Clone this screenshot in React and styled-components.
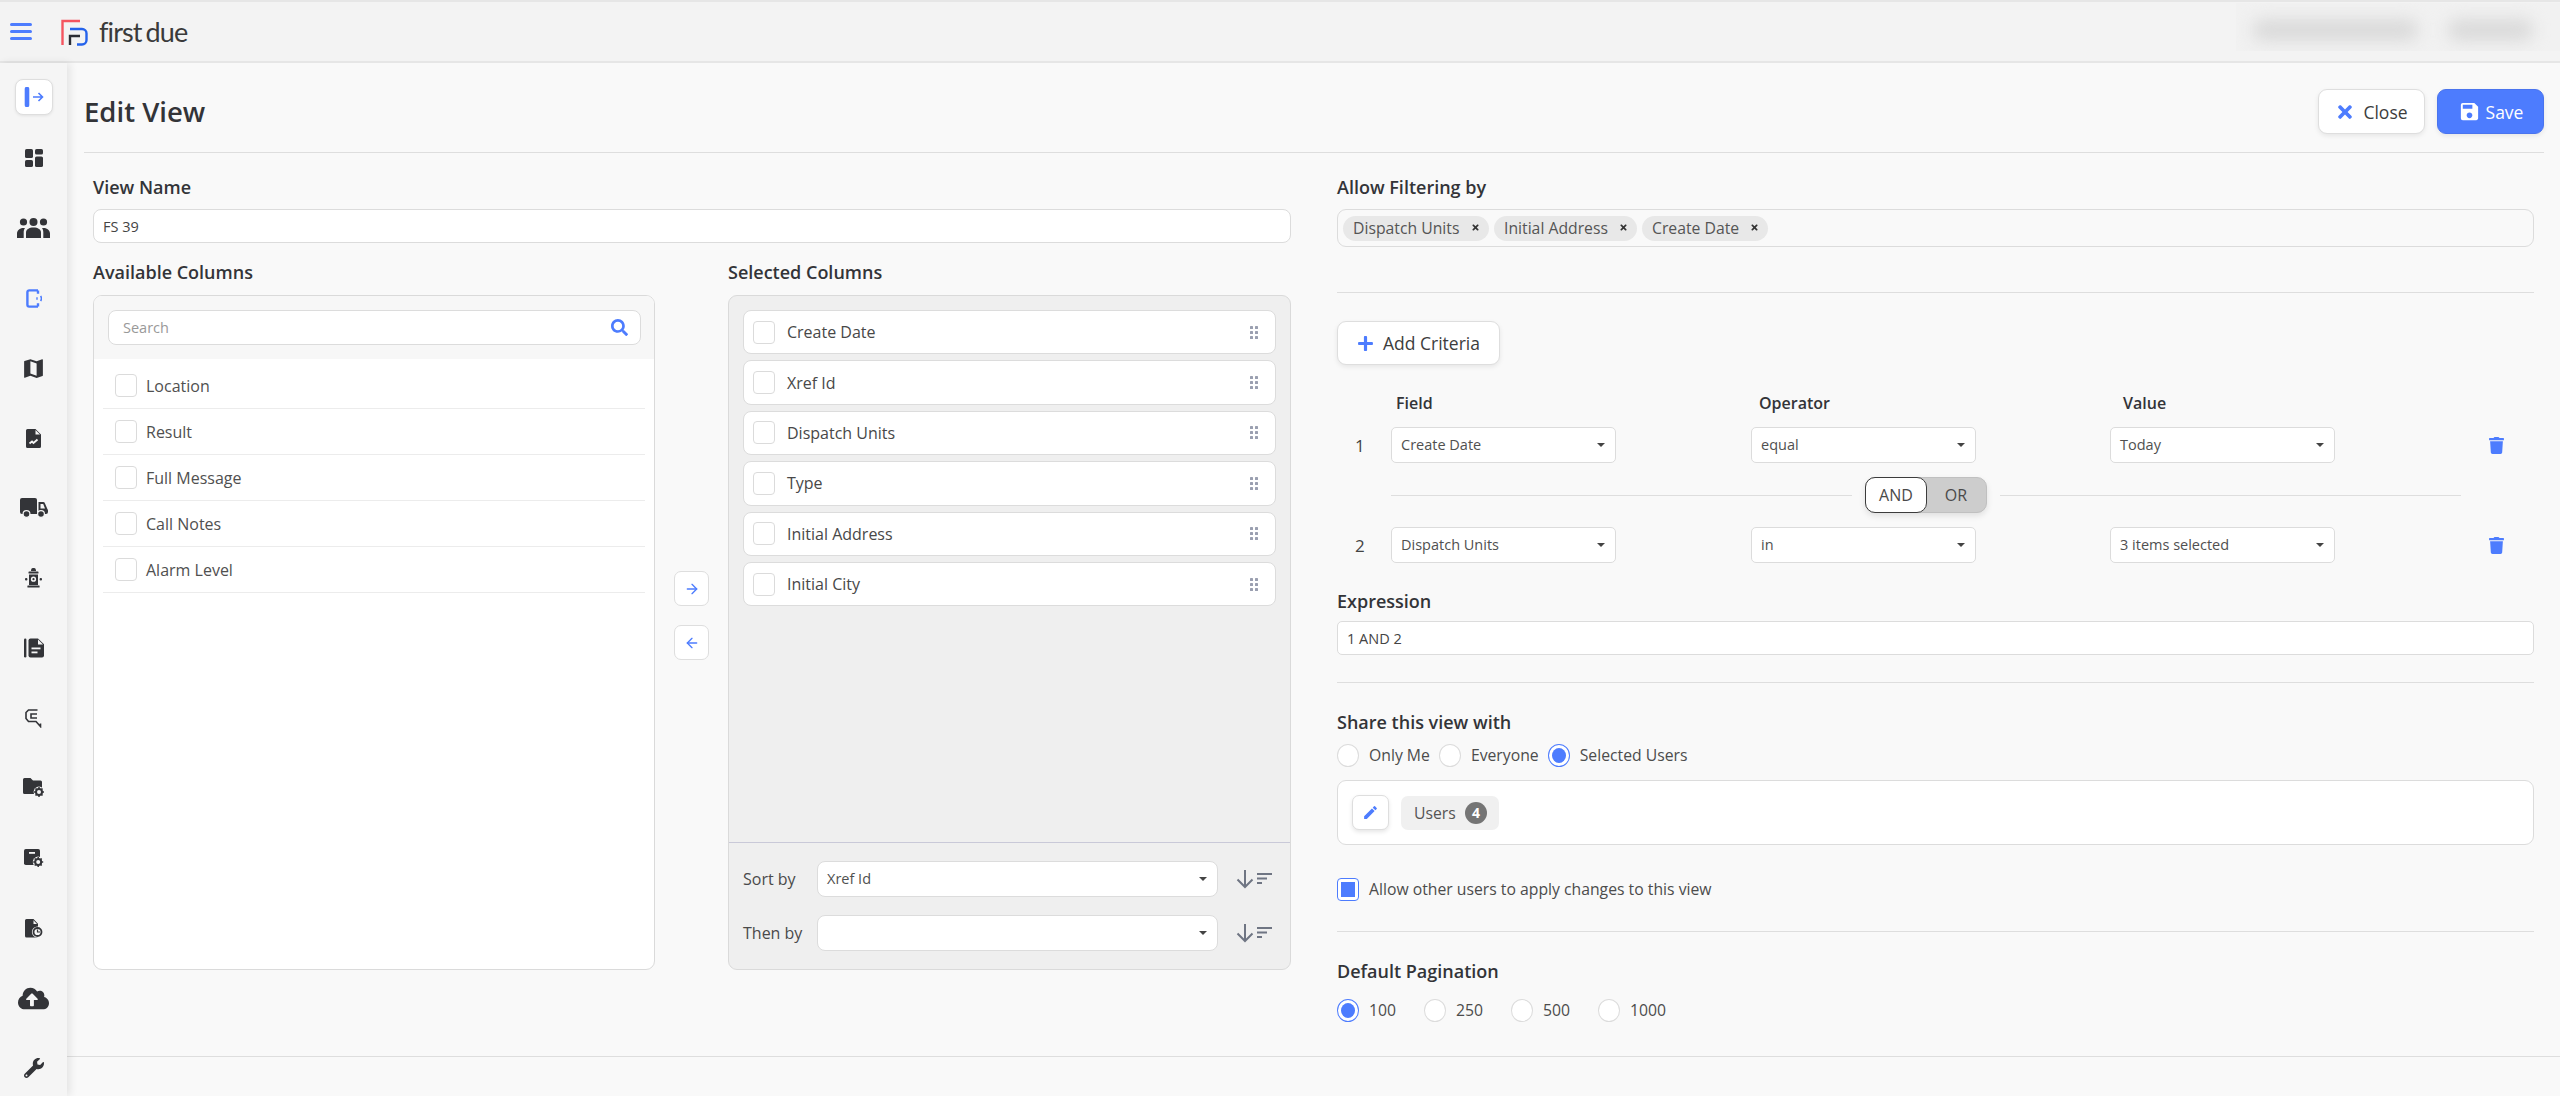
import styled, { createGlobalStyle } from "styled-components";
import { ArrowLeft, ArrowRight } from "lucide-react";
import { FaCloudUploadAlt, FaPlus, FaSearch, FaTimes, FaTrash, FaWrench } from "react-icons/fa";
import { MdEdit, MdMap, MdSave } from "react-icons/md";

const BLUE = "#4d7cfe";
const DARK = "#333438";

const GlobalStyle = createGlobalStyle`
  html, body {
    margin: 0;
    height: 100%;
    overflow: hidden;
    background: #f9f9f9;
    font-family: "Open Sans", "Noto Sans", sans-serif;
    color: #444;
  }
  * { box-sizing: border-box; }
`;

const Page = styled.div`
  display: flex;
  flex-direction: column;
  height: 100vh;
`;

const Header = styled.header`
  display: flex;
  align-items: flex-start;
  flex: none;
  height: 63px;
  padding-left: 10px;
  background: #f3f3f3;
  border-top: 2px solid #e6e6e6;
  border-bottom: 2px solid #e6e6e6;
`;

const Burger = styled.svg`
  margin-top: 21px;
  flex: none;
`;

const Logo = styled.svg`
  margin: 17px 0 0 29px;
  flex: none;
`;

const LogoText = styled.span`
  margin: 13px 0 0 11px;
  font-family: Lato, sans-serif;
  font-size: 27px;
  line-height: 34px;
  letter-spacing: -0.9px;
  word-spacing: -2px;
  color: #3a3a3a;
`;

const Redacted = styled.div`
  display: flex;
  align-items: center;
  gap: 30px;
  flex: none;
  width: 324px;
  height: 48px;
  margin: 1px 0 0 auto;
  padding: 6px 14px 0 17px;
  background: #f1f1f1;
  overflow: hidden;
`;

const Blur = styled.span`
  display: block;
  height: 22px;
  width: ${(p) => p.$w}px;
  background: #dadada;
  border-radius: 10px;
  filter: blur(8px);
`;

const Body = styled.div`
  display: flex;
  flex: 1;
  min-height: 0;
`;

const Sidebar = styled.nav`
  position: relative;
  z-index: 1;
  display: flex;
  flex-direction: column;
  align-items: center;
  flex: none;
  width: 67px;
  padding-top: 16px;
  background: #f5f5f5;
  box-shadow: 3px 0 8px rgba(0, 0, 0, 0.09);
  overflow: hidden;
`;

const SidebarToggle = styled.div`
  display: flex;
  align-items: center;
  justify-content: center;
  flex: none;
  width: 38px;
  height: 36px;
  margin-bottom: 8px;
  background: #fff;
  border: 1px solid #dedede;
  border-radius: 8px;
  box-shadow: 0 1px 3px rgba(0, 0, 0, 0.08);
`;

const NavItem = styled.div`
  display: flex;
  align-items: center;
  justify-content: center;
  flex: none;
  height: 70px;
  width: 100%;
  color: ${(p) => (p.$active ? BLUE : DARK)};
`;

const Content = styled.main`
  display: flex;
  flex-direction: column;
  flex: 1;
  min-width: 0;
`;

const TitleRow = styled.div`
  display: flex;
  justify-content: space-between;
  flex: none;
  height: 90px;
  margin: 0 16px 0 17px;
  padding-top: 26px;
  border-bottom: 1px solid #dedede;
`;

const Title = styled.h1`
  margin: 0;
  font-size: 27.5px;
  line-height: 46px;
  font-weight: 600;
  color: ${DARK};
`;

const ButtonGroup = styled.div`
  display: flex;
  gap: 12px;
`;

const Button = styled.button`
  display: flex;
  align-items: center;
  justify-content: center;
  gap: ${(p) => p.$gap || 8}px;
  width: ${(p) => p.$w}px;
  height: ${(p) => p.$h}px;
  padding: 0;
  font-family: inherit;
  font-size: 17.5px;
  color: ${(p) => (p.$primary ? "#fff" : "#3d3d3d")};
  background: ${(p) => (p.$primary ? BLUE : "#fff")};
  border: 1px solid ${(p) => (p.$primary ? "#4a74ee" : "#dedede")};
  border-radius: 9px;
  box-shadow: 0 2px 5px rgba(0, 0, 0, 0.08);
  svg { color: ${(p) => (p.$primary ? "#fff" : BLUE)}; flex: none; }
`;

const Form = styled.div`
  display: grid;
  grid-template-columns: 1198px 1197px;
  column-gap: 46px;
  flex: 1;
  padding-left: 26px;
`;

const Column = styled.section`
  display: flex;
  flex-direction: column;
  padding-top: 23px;
`;

const Label = styled.div`
  font-size: 18px;
  line-height: 22px;
  font-weight: 600;
  color: ${DARK};
  margin-top: ${(p) => p.$top || 0}px;
  margin-bottom: ${(p) => p.$bottom || 0}px;
`;

const TextField = styled.input`
  display: block;
  width: 100%;
  height: 34px;
  padding: 0 9px;
  font-family: inherit;
  font-size: 14.5px;
  color: #444;
  background: #fff;
  border: 1px solid #dcdcdc;
  border-radius: ${(p) => p.$radius || 8}px;
  outline: none;
  &::placeholder { color: #999; }
`;

const Transfer = styled.div`
  display: grid;
  grid-template-columns: 562px 1fr 563px;
  grid-template-rows: 22px 675px;
  row-gap: 12px;
  margin-top: 18px;
`;

const AvailablePanel = styled.div`
  grid-row: 2;
  grid-column: 1;
  background: #fff;
  border: 1px solid #dadada;
  border-radius: 9px;
  overflow: hidden;
`;

const SearchBar = styled.div`
  position: relative;
  height: 63px;
  padding: 14px 13px 0 14px;
  background: #f7f7f7;
  input { height: 35px; padding-left: 14px; }
  svg {
    position: absolute;
    top: 23px;
    right: 26px;
    color: ${BLUE};
  }
`;

const AvailableList = styled.div`
  padding: 4px 9px 0;
`;

const AvailableRow = styled.div`
  display: flex;
  align-items: center;
  gap: 9px;
  height: 46px;
  padding-left: 12px;
  font-size: 16px;
  font-weight: 500;
  color: #505050;
  border-bottom: 1px solid #ececec;
`;

const Check = styled.span`
  display: flex;
  align-items: center;
  justify-content: center;
  flex: none;
  width: 22px;
  height: 23px;
  background: #fff;
  border: 1px solid ${(p) => (p.$checked ? BLUE : "#dbdbdb")};
  border-radius: 4px;
  &::after {
    content: "";
    display: ${(p) => (p.$checked ? "block" : "none")};
    width: 14px;
    height: 15px;
    background: ${BLUE};
  }
`;

const MoveColumn = styled.div`
  grid-row: 2;
  grid-column: 2;
  display: flex;
  flex-direction: column;
  align-items: center;
  gap: 19px;
  padding-top: 276px;
`;

const MoveButton = styled.button`
  display: flex;
  align-items: center;
  justify-content: center;
  width: 35px;
  height: 35px;
  padding: 0;
  color: ${BLUE};
  background: #fff;
  border: 1px solid #dedede;
  border-radius: 7px;
`;

const SelectedLabel = styled(Label)`
  grid-row: 1;
  grid-column: 3;
`;

const SelectedPanel = styled.div`
  grid-row: 2;
  grid-column: 3;
  display: flex;
  flex-direction: column;
  background: #efefef;
  border: 1px solid #dadada;
  border-radius: 9px;
`;

const SelectedList = styled.div`
  display: flex;
  flex-direction: column;
  gap: 6px;
  flex: 1;
  padding: 14px 14px 0;
`;

const SelectedRow = styled.div`
  display: flex;
  align-items: center;
  gap: 12px;
  flex: none;
  height: 44.4px;
  padding: 0 16px 0 9px;
  font-size: 16px;
  color: #484848;
  background: #fff;
  border: 1px solid #dcdcdc;
  border-radius: 8px;
  svg { margin-left: auto; }
`;

const SortBox = styled.div`
  display: grid;
  grid-template-columns: 74px 401px auto;
  row-gap: 18px;
  align-items: center;
  align-content: start;
  flex: none;
  height: 127px;
  padding: 18px 14px 0;
  border-top: 1px solid #c9c9d8;
`;

const SortLabel = styled.span`
  font-size: 16px;
  font-weight: 500;
  color: #4a4a4a;
`;

const Select = styled.div`
  display: flex;
  align-items: center;
  height: 36px;
  padding: 0 10px 1px 9px;
  font-size: 14.5px;
  color: #505050;
  background: #fff;
  border: 1px solid #dcdcdc;
  border-radius: ${(p) => p.$radius || 5}px;
  &::after {
    content: "";
    margin-left: auto;
    width: 0;
    height: 0;
    border-left: 4px solid transparent;
    border-right: 4px solid transparent;
    border-top: 4px solid #444;
  }
`;

const SortIcon = styled.svg`
  margin-left: 18px;
`;

const TagBox = styled.div`
  display: flex;
  align-items: center;
  gap: 5px;
  height: 38px;
  padding-left: 5px;
  border: 1px solid #dcdcdc;
  border-radius: 9px;
`;

const Tag = styled.span`
  display: flex;
  align-items: center;
  justify-content: space-between;
  width: ${(p) => p.$w}px;
  height: 25px;
  padding: 0 9px 1px 10px;
  font-size: 15.75px;
  color: #555;
  background: #e8e8e8;
  border-radius: 13px;
  svg { color: #333; }
`;

const Divider = styled.hr`
  width: 100%;
  height: 1px;
  margin: ${(p) => p.$top}px 0 0;
  border: 0;
  background: #dedede;
`;

const AddCriteria = styled(Button)`
  margin-top: 28px;
  flex: none;
`;

const CriteriaHead = styled.div`
  display: flex;
  margin: 27px 0 13px 54px;
`;

const HeadCell = styled.div`
  width: 360px;
  padding-left: ${(p) => p.$indent}px;
  font-size: 16px;
  line-height: 22px;
  font-weight: 600;
  color: ${DARK};
`;

const CriteriaRow = styled.div`
  display: flex;
  align-items: center;
`;

const RowNumber = styled.span`
  width: 54px;
  padding-left: 18px;
  font-size: 17px;
  color: #444;
`;

const CriteriaSelect = styled(Select)`
  width: 225px;
  margin-right: ${(p) => p.$after}px;
`;

const TrashIcon = styled(FaTrash)`
  color: ${BLUE};
  margin-left: 3px;
`;

const Connector = styled.div`
  display: flex;
  align-items: center;
  gap: 13px;
  width: 1070px;
  height: 64px;
  margin-left: 54px;
`;

const Line = styled.span`
  flex: 1;
  height: 1px;
  background: #dedede;
`;

const Toggle = styled.div`
  display: flex;
  flex: none;
  width: 122px;
  height: 36px;
  font-size: 16px;
  color: #4a4a4a;
  background: #cdcdcd;
  border: 1px solid #c0c0c0;
  border-radius: 10px;
  box-shadow: 0 3px 6px rgba(0, 0, 0, 0.1);
`;

const ToggleOption = styled.span`
  display: flex;
  align-items: center;
  justify-content: center;
  flex: 1;
  background: ${(p) => (p.$on ? "#fff" : "transparent")};
  margin: ${(p) => (p.$on ? "-1px" : "0")};
  border: ${(p) => (p.$on ? "1.5px solid #3c3c3c" : "0")};
  border-radius: 10px;
`;

const OptionRow = styled.div`
  display: flex;
  align-items: center;
  gap: ${(p) => p.$gap}px;
  margin-top: ${(p) => p.$top}px;
`;

const Option = styled.label`
  display: flex;
  align-items: center;
  gap: 10px;
  font-size: 15.75px;
  line-height: 23px;
  color: #4c4c4c;
`;

const Radio = styled.span`
  display: flex;
  align-items: center;
  justify-content: center;
  flex: none;
  width: 22px;
  height: 23px;
  background: #fff;
  border: 1px solid ${(p) => (p.$checked ? BLUE : "#dcdcdc")};
  border-radius: 50%;
  &::after {
    content: "";
    display: ${(p) => (p.$checked ? "block" : "none")};
    width: 14px;
    height: 15px;
    border-radius: 50%;
    background: ${BLUE};
  }
`;

const UsersBox = styled.div`
  display: flex;
  align-items: center;
  gap: 12px;
  height: 65px;
  margin-top: 13px;
  padding-left: 14px;
  background: #fff;
  border: 1px solid #dcdcdc;
  border-radius: 9px;
`;

const EditButton = styled(MoveButton)`
  width: 37px;
  height: 35px;
  box-shadow: 0 2px 4px rgba(0, 0, 0, 0.1);
`;

const UsersChip = styled.div`
  display: flex;
  align-items: center;
  justify-content: space-between;
  width: 98px;
  height: 34px;
  padding: 0 12px 0 13px;
  font-size: 15.75px;
  color: #555;
  background: #f0f0f0;
  border-radius: 7px;
`;

const CountBadge = styled.span`
  display: flex;
  align-items: center;
  justify-content: center;
  width: 22px;
  height: 22px;
  font-size: 14px;
  font-weight: 700;
  color: #fff;
  background: #757575;
  border-radius: 50%;
`;

const Footer = styled.div`
  flex: none;
  height: 40px;
  border-top: 1px solid #dedede;
`;

// sidebar drawings, the packages have nothing close to these
const DashboardIcon = () => (
  <svg width="18" height="18" viewBox="0 0 18 18" fill="currentColor">
    <rect x="0" y="0" width="8" height="9" rx="1.6" />
    <rect x="10" y="0" width="8" height="5.5" rx="1.6" />
    <rect x="0" y="11" width="8" height="7" rx="1.6" />
    <rect x="10" y="7.5" width="8" height="10.5" rx="1.6" />
  </svg>
);

const TeamIcon = () => (
  <svg width="33" height="20" viewBox="0 0 33 20" fill="currentColor">
    <circle cx="6.5" cy="4" r="3.6" />
    <circle cx="16.5" cy="4" r="4" />
    <circle cx="26.5" cy="4" r="3.6" />
    <path d="M9 20V14.5C9 11.5 12 9.5 16.5 9.5S24 11.5 24 14.5V20Z" />
    <path d="M0 20V15.5C0 12.5 2.5 10 6.5 10c.6 0 1 0 1.5.1C7 11.4 6.7 13 6.7 14.5V20Z" />
    <path d="M33 20V15.5C33 12.5 30.5 10 26.5 10c-.6 0-1 0-1.5.1C26 11.4 26.3 13 26.3 14.5V20Z" />
  </svg>
);

const DoorIcon = () => (
  <svg width="16" height="19" viewBox="0 0 16 19" fill="none" stroke="currentColor" strokeWidth="2.4">
    <path d="M12 1.4H3.2a1.8 1.8 0 0 0-1.8 1.8v12.6a1.8 1.8 0 0 0 1.8 1.8H12" />
    <path d="M12 1.4v3.4M12 14.2v3.4" />
    <path d="M14.6 7a4.4 4.4 0 0 1 0 5" strokeWidth="1.6" />
    <path d="M11 8.2v2.6" strokeWidth="1.4" />
  </svg>
);

const ReportIcon = () => (
  <svg width="15" height="19" viewBox="0 0 15 19">
    <path fill="currentColor" d="M1.5 0H9.5L15 5.5V17.5A1.5 1.5 0 0 1 13.5 19H1.5A1.5 1.5 0 0 1 0 17.5V1.5A1.5 1.5 0 0 1 1.5 0Z" />
    <path fill="#f5f5f5" d="M9.5 1V5.5H14Z" />
    <path fill="none" stroke="#f5f5f5" strokeWidth="1.8" d="M3.5 14.5L6 12.5L7.5 14L11.5 10.5" />
  </svg>
);

const TruckIcon = () => (
  <svg width="28" height="20" viewBox="0 0 28 20" fill="currentColor">
    <path d="M2 0H15a2 2 0 0 1 2 2V16H2a2 2 0 0 1-2-2V2a2 2 0 0 1 2-2Z" />
    <path d="M18.5 4H23a2 2 0 0 1 2 1.4L27.4 11a3 3 0 0 1 .6 2V14a2 2 0 0 1-2 2H18.5Z" />
    <path fill="#f5f5f5" d="M20.5 6H23.2L25 10.4H20.5Z" />
    <circle cx="6.5" cy="16" r="3.4" stroke="#f5f5f5" strokeWidth="1.2" />
    <circle cx="21" cy="16" r="3.4" stroke="#f5f5f5" strokeWidth="1.2" />
  </svg>
);

const HydrantIcon = () => (
  <svg width="17" height="20" viewBox="0 0 17 20" fill="currentColor">
    <path d="M6 2.4a2.5 2.5 0 0 1 5 0V3H6Z" />
    <rect x="3.5" y="3.6" width="10" height="2" rx="0.6" />
    <path fillRule="evenodd" d="M4 6.5H13V17H4ZM8.5 8.6a2.6 2.6 0 1 0 0 5.2a2.6 2.6 0 0 0 0-5.2Z" />
    <circle cx="8.5" cy="11.2" r="1.1" />
    <rect x="0" y="10" width="2.4" height="2.4" rx="1" />
    <rect x="14.6" y="10" width="2.4" height="2.4" rx="1" />
    <rect x="2.4" y="17.4" width="12.2" height="2" rx="0.5" />
  </svg>
);

const BookIcon = () => (
  <svg width="20" height="20" viewBox="0 0 20 20">
    <rect fill="currentColor" x="0" y="0.5" width="2.4" height="19" rx="1.2" />
    <path fill="currentColor" d="M6.5 0.5H14L20 6.2V17.5A2 2 0 0 1 18 19.5H6.5A2 2 0 0 1 4.5 17.5V2.5A2 2 0 0 1 6.5 0.5Z" />
    <path fill="#f5f5f5" d="M14 1.6V6.4H19Z" />
    <rect fill="#f5f5f5" x="7.5" y="9.5" width="9" height="1.8" />
    <rect fill="#f5f5f5" x="7.5" y="13.5" width="6" height="1.8" />
  </svg>
);

const SearchDocIcon = () => (
  <svg width="17" height="19" viewBox="0 0 17 19" fill="none" stroke="currentColor" strokeWidth="1.6">
    <path d="M12.5 1H3.5L1 3.5V9.5L3.5 12.5H11L15.5 17.5V14.5" />
    <path d="M12 5H6V9H12" />
  </svg>
);

const Gear = ({ cx, cy }) => (
  <g>
    <circle cx={cx} cy={cy} r="5.4" fill="#f5f5f5" />
    <circle cx={cx} cy={cy} r="3" fill="none" stroke="currentColor" strokeWidth="2" />
    <path stroke="currentColor" strokeWidth="1.5" d={`M${cx} ${cy - 5}v2M${cx} ${cy + 3}v2M${cx - 5} ${cy}h2M${cx + 3} ${cy}h2M${cx - 3.5} ${cy - 3.5}l1.4 1.4M${cx + 2.1} ${cy + 2.1}l1.4 1.4M${cx + 3.5} ${cy - 3.5}l-1.4 1.4M${cx - 2.1} ${cy + 2.1}l-1.4 1.4`} />
  </g>
);

const FolderGearIcon = () => (
  <svg width="22" height="20" viewBox="0 0 22 20" fill="currentColor">
    <path d="M1.5 0H7.5L10 2.5H17.5A1.5 1.5 0 0 1 19 4V14.5A1.5 1.5 0 0 1 17.5 16H1.5A1.5 1.5 0 0 1 0 14.5V1.5A1.5 1.5 0 0 1 1.5 0Z" />
    <Gear cx={16} cy={14} />
  </svg>
);

const BoxGearIcon = () => (
  <svg width="20" height="19" viewBox="0 0 20 19" fill="currentColor">
    <rect x="0" y="0" width="16" height="16" rx="1.8" />
    <rect x="5" y="3" width="6" height="1.8" fill="#f5f5f5" />
    <Gear cx={14.2} cy={13} />
  </svg>
);

const DocClockIcon = () => (
  <svg width="18" height="19" viewBox="0 0 18 19" fill="currentColor">
    <path d="M1.5 0H8.5L13 4.8V17A1.5 1.5 0 0 1 11.5 18.5H1.5A1.5 1.5 0 0 1 0 17V1.5A1.5 1.5 0 0 1 1.5 0Z" />
    <path fill="#f5f5f5" d="M8.5 1.2V5H12Z" />
    <circle cx="12.5" cy="13" r="5.6" fill="#f5f5f5" />
    <circle cx="12.5" cy="13" r="4" fill="none" stroke="currentColor" strokeWidth="1.8" />
    <path d="M12.5 10.5V13H15" fill="none" stroke="currentColor" strokeWidth="1.2" />
  </svg>
);

const navIcons = [
  { icon: <DashboardIcon /> },
  { icon: <TeamIcon /> },
  { icon: <DoorIcon />, active: true },
  { icon: <MdMap size={25} /> },
  { icon: <ReportIcon /> },
  { icon: <TruckIcon /> },
  { icon: <HydrantIcon /> },
  { icon: <BookIcon /> },
  { icon: <SearchDocIcon /> },
  { icon: <FolderGearIcon /> },
  { icon: <BoxGearIcon /> },
  { icon: <DocClockIcon /> },
  { icon: <FaCloudUploadAlt size={31} /> },
  { icon: <FaWrench size={20} /> },
];

const Grip = () => (
  <svg width="9" height="13" viewBox="0 0 9 13" fill="#9a9fb0">
    {[0, 5, 10].map((y) =>
      [0, 5].map((x) => <rect key={`${x}-${y}`} x={x} y={y} width="3" height="3" rx="0.6" />)
    )}
  </svg>
);

const SortDirection = () => (
  <SortIcon width="36" height="20" viewBox="0 0 36 20" fill="none" stroke="#6f7583" strokeWidth="2">
    <path d="M9 1V18M1.5 10.5L9 18L16.5 10.5" />
    <path d="M21 5H36M21 9.5H31M21 14H26" />
  </SortIcon>
);

const availableColumns = ["Location", "Result", "Full Message", "Call Notes", "Alarm Level"];
const selectedColumns = ["Create Date", "Xref Id", "Dispatch Units", "Type", "Initial Address", "Initial City"];

function App() {
  return (
    <Page>
      <GlobalStyle />
      <Header>
        <Burger width="22" height="17" viewBox="0 0 22 17" stroke={BLUE} strokeWidth="3" strokeLinecap="round">
          <path d="M1.5 1.5H20.5M1.5 8.5H20.5M1.5 15.5H20.5" />
        </Burger>
        <Logo width="27" height="27" viewBox="0 0 27 27" fill="none" strokeWidth="2.4">
          <path stroke="#f4555f" d="M1.5 26V2H19" />
          <path stroke="#2563eb" d="M9 10H21a4.5 4.5 0 0 1 4.5 4.5V21A4.5 4.5 0 0 1 21 25.5H16" />
          <path stroke="#2b2d33" d="M9 26V17H19" />
        </Logo>
        <LogoText>first due</LogoText>
        <Redacted>
          <Blur $w={165} />
          <Blur $w={85} />
        </Redacted>
      </Header>
      <Body>
        <Sidebar>
          <SidebarToggle>
            <svg width="20" height="20" viewBox="0 0 20 20" fill="none" stroke={BLUE}>
              <path d="M3 2V18" strokeWidth="4.6" strokeLinecap="round" />
              <path d="M9 10H18.5M14.5 6L18.5 10L14.5 14" strokeWidth="1.6" />
            </svg>
          </SidebarToggle>
          {navIcons.map((item, i) => (
            <NavItem key={i} $active={item.active}>{item.icon}</NavItem>
          ))}
        </Sidebar>
        <Content>
          <TitleRow>
            <Title>Edit View</Title>
            <ButtonGroup>
              <Button $w={107} $h={45}><FaTimes size={20} />Close</Button>
              <Button $w={107} $h={45} $primary $gap={5}><MdSave size={23} />Save</Button>
            </ButtonGroup>
          </TitleRow>
          <Form>
            <Column>
              <Label $bottom={11}>View Name</Label>
              <TextField readOnly value="FS 39" />
              <Transfer>
                <Label>Available Columns</Label>
                <SelectedLabel>Selected Columns</SelectedLabel>
                <AvailablePanel>
                  <SearchBar>
                    <TextField readOnly placeholder="Search" />
                    <FaSearch size={17} />
                  </SearchBar>
                  <AvailableList>
                    {availableColumns.map((name) => (
                      <AvailableRow key={name}><Check />{name}</AvailableRow>
                    ))}
                  </AvailableList>
                </AvailablePanel>
                <MoveColumn>
                  <MoveButton><ArrowRight size={16} /></MoveButton>
                  <MoveButton><ArrowLeft size={16} /></MoveButton>
                </MoveColumn>
                <SelectedPanel>
                  <SelectedList>
                    {selectedColumns.map((name) => (
                      <SelectedRow key={name}><Check />{name}<Grip /></SelectedRow>
                    ))}
                  </SelectedList>
                  <SortBox>
                    <SortLabel>Sort by</SortLabel>
                    <Select $radius={8}>Xref Id</Select>
                    <SortDirection />
                    <SortLabel>Then by</SortLabel>
                    <Select $radius={8} />
                    <SortDirection />
                  </SortBox>
                </SelectedPanel>
              </Transfer>
            </Column>
            <Column>
              <Label $bottom={11}>Allow Filtering by</Label>
              <TagBox>
                <Tag $w={146}>Dispatch Units<FaTimes size={9} /></Tag>
                <Tag $w={143}>Initial Address<FaTimes size={9} /></Tag>
                <Tag $w={126}>Create Date<FaTimes size={9} /></Tag>
              </TagBox>
              <Divider $top={45} />
              <AddCriteria $w={163} $h={44} $gap={9}><FaPlus size={17} />Add Criteria</AddCriteria>
              <CriteriaHead>
                <HeadCell $indent={5}>Field</HeadCell>
                <HeadCell $indent={8}>Operator</HeadCell>
                <HeadCell $indent={12}>Value</HeadCell>
              </CriteriaHead>
              <CriteriaRow>
                <RowNumber>1</RowNumber>
                <CriteriaSelect $after={135}>Create Date</CriteriaSelect>
                <CriteriaSelect $after={134}>equal</CriteriaSelect>
                <CriteriaSelect $after={150}>Today</CriteriaSelect>
                <TrashIcon size={17} />
              </CriteriaRow>
              <Connector>
                <Line />
                <Toggle>
                  <ToggleOption $on>AND</ToggleOption>
                  <ToggleOption>OR</ToggleOption>
                </Toggle>
                <Line />
              </Connector>
              <CriteriaRow>
                <RowNumber>2</RowNumber>
                <CriteriaSelect $after={135}>Dispatch Units</CriteriaSelect>
                <CriteriaSelect $after={134}>in</CriteriaSelect>
                <CriteriaSelect $after={150}>3 items selected</CriteriaSelect>
                <TrashIcon size={17} />
              </CriteriaRow>
              <Label $top={27} $bottom={9}>Expression</Label>
              <TextField readOnly value="1 AND 2" $radius={5} />
              <Divider $top={27} />
              <Label $top={28}>Share this view with</Label>
              <OptionRow $gap={9} $top={11}>
                <Option><Radio />Only Me</Option>
                <Option><Radio />Everyone</Option>
                <Option><Radio $checked />Selected Users</Option>
              </OptionRow>
              <UsersBox>
                <EditButton><MdEdit size={17} /></EditButton>
                <UsersChip>Users<CountBadge>4</CountBadge></UsersChip>
              </UsersBox>
              <OptionRow $gap={9} $top={33}>
                <Option><Check $checked />Allow other users to apply changes to this view</Option>
              </OptionRow>
              <Divider $top={30} />
              <Label $top={28}>Default Pagination</Label>
              <OptionRow $gap={28} $top={17}>
                <Option><Radio $checked />100</Option>
                <Option><Radio />250</Option>
                <Option><Radio />500</Option>
                <Option><Radio />1000</Option>
              </OptionRow>
            </Column>
          </Form>
          <Footer />
        </Content>
      </Body>
    </Page>
  );
}

export default App;
